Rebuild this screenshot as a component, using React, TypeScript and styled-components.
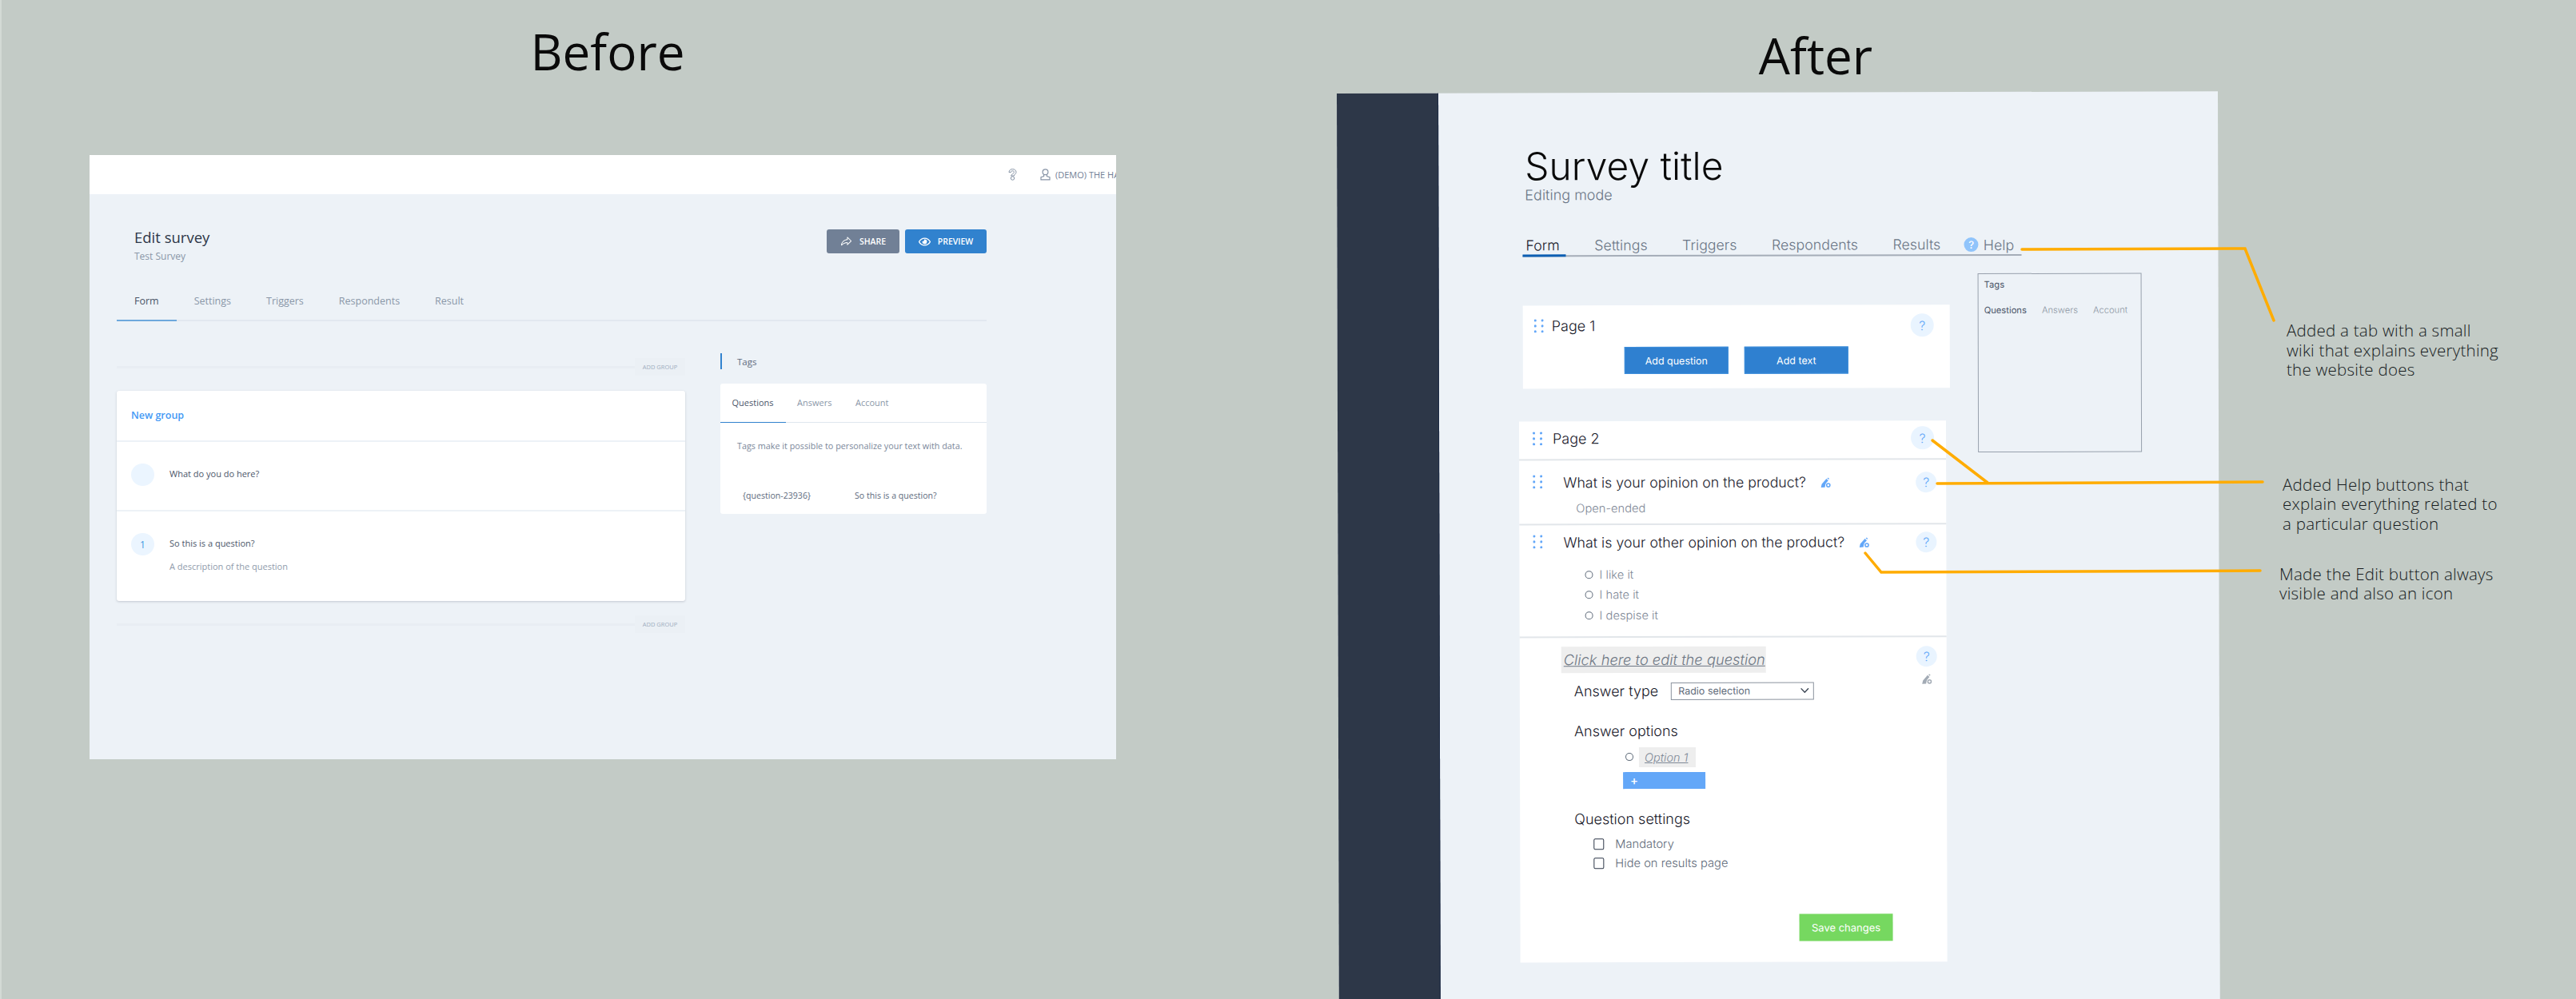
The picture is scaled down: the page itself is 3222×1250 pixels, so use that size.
import React, { JSX } from 'react'
import styled, { createGlobalStyle } from 'styled-components'
import { FaRegEye } from 'react-icons/fa'
import { PiShareFat } from 'react-icons/pi'

const GlobalStyle = createGlobalStyle`
  html, body {
    margin: 0;
    padding: 0;
    background: #c3cbc6;
    overflow: hidden;
  }
  * {
    box-sizing: border-box;
  }
`

const Board = styled.div`
  position: relative;
  display: flex;
  width: 3222px;
  height: 1250px;
  overflow: hidden;
  background: #c3cbc6;
  border-left: 2px solid #d3dad5;
`

const Heading = styled.div<{ $height: number; $top: number; $left: number }>`
  height: ${(p) => p.$height}px;
  padding: ${(p) => p.$top}px 0 0 ${(p) => p.$left}px;
  text-align: center;
  font-family: 'Open Sans', sans-serif;
  font-size: 62px;
  line-height: 62px;
  color: #0a0a0a;
`

/* ---------- before ---------- */

const BeforeColumn = styled.section`
  width: 1284px;
  margin-left: 110px;
  flex-shrink: 0;
`

const BeforePanel = styled.div`
  height: 756px;
  overflow: hidden;
  background: #edf2f7;
  font-family: 'Open Sans', sans-serif;
`

const TopBar = styled.header`
  height: 49px;
  display: flex;
  align-items: center;
  background: #fff;
  padding-left: 1149px;
  white-space: nowrap;
  color: #718096;
  font-size: 11px;
  svg {
    flex-shrink: 0;
  }
`

const UserLabel = styled.div`
  display: flex;
  align-items: center;
  flex-shrink: 0;
  gap: 6px;
  margin-left: 29px;
`

const BeforeBody = styled.div`
  width: 1122px;
  padding-left: 34px;
`

const TitleRow = styled.div`
  display: flex;
  justify-content: space-between;
  padding: 42px 0 0 22px;
`

const EditTitle = styled.div`
  font-size: 18.5px;
  line-height: 24px;
  color: #2d3748;
  font-weight: 500;
`

const EditSubtitle = styled.div`
  font-size: 12px;
  line-height: 18px;
  margin-top: 3px;
  color: #8a97a8;
`

const HeadButtons = styled.div`
  display: flex;
  gap: 7px;
  margin-top: 2px;
`

const HeadButton = styled.div<{ $color: string; $width: number }>`
  width: ${(p) => p.$width}px;
  height: 30px;
  display: flex;
  align-items: center;
  justify-content: center;
  gap: 9px;
  border-radius: 3px;
  background: ${(p) => p.$color};
  color: #fff;
  font-size: 10.5px;
  font-weight: 600;
  svg {
    font-size: 15px;
    flex-shrink: 0;
  }
`

const BeforeTabs = styled.nav`
  height: 49px;
  margin-top: 23px;
  display: flex;
  border-bottom: 2px solid #e2e8f0;
`

const BeforeTab = styled.div<{ $active?: boolean }>`
  height: 49px;
  padding: 0 22px;
  display: flex;
  align-items: center;
  font-size: 12.5px;
  color: ${(p) => (p.$active ? '#4a5568' : '#8a97a8')};
  border-bottom: 2px solid ${(p) => (p.$active ? '#6ea8dd' : 'transparent')};
`

const BeforeColumns = styled.div`
  display: flex;
  gap: 44px;
`

const FormColumn = styled.div`
  width: 711px;
  padding-top: 46px;
`

const AddGroup = styled.div`
  height: 22px;
  display: flex;
  align-items: center;
`

const AddGroupLine = styled.div`
  flex: 1;
  height: 3px;
  background: #e8edf3;
`

const AddGroupLabel = styled.div`
  width: 63px;
  height: 22px;
  display: flex;
  align-items: center;
  justify-content: center;
  background: #ebf0f5;
  color: #a0aec0;
  font-size: 7.5px;
`

const GroupCard = styled.div`
  margin: 19px 0 18px;
  background: #fff;
  border-radius: 3px;
  box-shadow: 0 1px 3px rgba(45, 55, 72, 0.22);
`

const GroupHead = styled.div`
  height: 64px;
  padding: 0 18px 2px;
  display: flex;
  align-items: center;
  border-bottom: 2px solid #edf2f7;
  color: #4299f5;
  font-size: 12.5px;
  font-weight: 600;
`

const GroupQuestion = styled.div<{ $bottom: number; $ruled?: boolean }>`
  display: flex;
  gap: 19px;
  padding: 27px 18px ${(p) => p.$bottom}px;
  border-bottom: ${(p) => (p.$ruled ? '2px solid #edf2f7' : 'none')};
`

const NumberBubble = styled.div`
  width: 29px;
  height: 28px;
  border-radius: 50%;
  display: flex;
  align-items: center;
  justify-content: center;
  background: #ebf5ff;
  color: #4299e1;
  font-size: 12px;
`

const GroupQuestionText = styled.div`
  font-size: 11px;
  line-height: 26px;
  color: #4a5568;
`

const GroupQuestionNote = styled.div`
  font-size: 11px;
  line-height: 18px;
  margin-top: 7px;
  color: #8f9bab;
`

const TagsColumn = styled.div`
  width: 333px;
  padding-top: 40px;
`

const TagsHeading = styled.div`
  height: 20px;
  padding-left: 19px;
  display: flex;
  align-items: center;
  border-left: 2px solid #3182ce;
  color: #5d6a7d;
  font-size: 11.5px;
`

const TagsCard = styled.div`
  height: 163px;
  margin-top: 18px;
  background: #fff;
  border-radius: 3px;
`

const TagsTabs = styled.div`
  height: 49px;
  display: flex;
  border-bottom: 1px solid #dfe6ee;
`

const TagsTab = styled.div<{ $active?: boolean }>`
  height: 49px;
  padding: 0 15px 2px 14.5px;
  display: flex;
  align-items: center;
  font-size: 11px;
  color: ${(p) => (p.$active ? '#4a5568' : '#8a97a8')};
  border-bottom: 1px solid ${(p) => (p.$active ? '#3182ce' : 'transparent')};
`

const TagsIntro = styled.div`
  padding: 21px 0 0 21px;
  font-size: 10.8px;
  line-height: 16px;
  color: #7a879a;
`

const TagRow = styled.div`
  display: flex;
  margin-top: 46px;
  padding-left: 28px;
  font-size: 10.6px;
  line-height: 16px;
  color: #5d6a7d;
`

const TagName = styled.div`
  width: 140px;
`

/* ---------- after ---------- */

const AfterColumn = styled.section`
  width: 1102px;
  margin-left: 276px;
  flex-shrink: 0;
`

const AfterPanel = styled.div`
  height: 1160px;
  display: flex;
  background: #edf2f7;
  font-family: Inter, sans-serif;
  font-weight: 300;
  color: #1a202c;
  transform: rotate(-0.14deg);
  transform-origin: top left;
`

const Sidebar = styled.aside`
  width: 127px;
  background: #2d3748;
  border-right: 1px solid #1c2a44;
`

const Main = styled.main`
  padding: 63px 0 0 105px;
`

const SurveyTitle = styled.h1`
  margin: 0;
  padding-left: 3px;
  font-size: 48px;
  line-height: 58px;
  font-weight: 300;
  color: #0a0a0a;
`

const SurveySubtitle = styled.div`
  margin-top: -5px;
  padding-left: 3px;
  font-size: 18px;
  line-height: 24px;
  color: #6b7686;
`

const AfterTabs = styled.nav`
  width: 624px;
  height: 26px;
  margin-top: 39px;
  padding-left: 4px;
  display: flex;
  align-items: center;
  gap: 43.5px;
  border-bottom: 2px solid #a5adb8;
  font-size: 17.8px;
  color: #6b7686;
`

const AfterTab = styled.div<{ $active?: boolean }>`
  position: relative;
  height: 24px;
  line-height: 24px;
  color: ${(p) => (p.$active ? '#1a202c' : '#6b7686')};
  &::after {
    content: '';
    display: ${(p) => (p.$active ? 'block' : 'none')};
    position: absolute;
    left: -4px;
    right: -8px;
    bottom: -2px;
    height: 3px;
    background: #0d5fb3;
  }
`

const HelpTab = styled.div`
  display: flex;
  align-items: center;
  gap: 6px;
  margin-left: -14px;
  height: 24px;
`

const HelpDisc = styled.div`
  width: 18px;
  height: 18px;
  border-radius: 50%;
  display: flex;
  align-items: center;
  justify-content: center;
  background: #90c4fb;
  color: #fff;
  font-size: 13px;
  font-weight: 500;
`

const AfterColumns = styled.div`
  display: flex;
  align-items: flex-start;
`

const PagesColumn = styled.div`
  width: 534px;
  padding-top: 61px;
`

const PageCard = styled.div<{ $shift?: number; $top?: number }>`
  width: 534px;
  margin-left: ${(p) => p.$shift ?? 0}px;
  margin-top: ${(p) => p.$top ?? 0}px;
  background: #fff;
`

const PageOneCard = styled(PageCard)`
  height: 104px;
`

const PageHead = styled.div<{ $padding: string; $gap: number; $ruled?: boolean }>`
  display: flex;
  align-items: center;
  gap: ${(p) => p.$gap}px;
  padding: ${(p) => p.$padding};
  font-size: 18px;
  border-bottom: ${(p) => (p.$ruled ? '2px solid #e2e6ea' : 'none')};
`

const HelpBubble = styled.div<{ $size: number }>`
  width: ${(p) => p.$size}px;
  height: ${(p) => p.$size}px;
  margin-left: auto;
  flex-shrink: 0;
  border-radius: 50%;
  display: flex;
  align-items: center;
  justify-content: center;
  background: #e9f4ff;
  color: #63a7f8;
  font-size: 16px;
`

const PageActions = styled.div`
  display: flex;
  justify-content: center;
  gap: 20px;
  margin-top: 12px;
`

const AddButton = styled.div`
  width: 130px;
  height: 34px;
  display: flex;
  align-items: center;
  justify-content: center;
  background: #2f80d0;
  border: 1px solid #3f8fdc;
  color: #fff;
  font-size: 12.5px;
  font-weight: 400;
`

const QuestionBlock = styled.div<{ $top: number; $bottom: number }>`
  padding: ${(p) => p.$top}px 12px ${(p) => p.$bottom}px 17px;
  border-bottom: 2px solid #e2e6ea;
`

const QuestionHead = styled.div`
  display: flex;
  align-items: center;
`

const DragSlot = styled.div`
  margin-top: -4px;
  display: flex;
`

const QuestionTitle = styled.div`
  margin: 0 18px 0 26px;
  font-size: 17.8px;
  line-height: 26px;
`

const QuestionKind = styled.div`
  margin: 8px 0 0 54px;
  font-size: 14.7px;
  line-height: 22px;
  color: #7f8997;
`

const RadioList = styled.div`
  margin: 14px 0 0 65px;
`

const RadioRow = styled.div`
  height: 25.5px;
  display: flex;
  align-items: center;
  gap: 8px;
  font-size: 14.7px;
  color: #7f8997;
`

const RadioMark = styled.span`
  width: 10px;
  height: 10px;
  flex-shrink: 0;
  border: 1.5px solid #5f6b7a;
  border-radius: 50%;
`

const Editor = styled.div`
  display: flex;
  padding: 11px 12px 26px 52px;
`

const EditorForm = styled.div`
  flex: 1;
  padding-right: 30px;
`

const EditorTools = styled.div`
  width: 26px;
  display: flex;
  flex-direction: column;
  align-items: center;
  gap: 9px;
`

const EditableTitle = styled.div`
  width: 256px;
  height: 33px;
  padding: 0 3px;
  display: flex;
  align-items: center;
  background: #eeeeee;
  color: #6f7885;
  font-size: 18.3px;
  font-style: italic;
  text-decoration: underline;
  white-space: nowrap;
`

const FieldBlock = styled.div<{ $top: number }>`
  margin: ${(p) => p.$top}px 0 0 16px;
`

const FieldLabel = styled.div`
  font-size: 18px;
  line-height: 26px;
`

const TypeRow = styled.div`
  display: flex;
  align-items: center;
  gap: 16px;
`

const TypeSelect = styled.div`
  width: 179px;
  height: 22px;
  padding: 0 5px 0 8px;
  display: flex;
  align-items: center;
  justify-content: space-between;
  border: 1.5px solid #8b939e;
  color: #5f6b7a;
  font-size: 12.5px;
  font-weight: 400;
`

const OptionRow = styled.div`
  display: flex;
  align-items: center;
  gap: 7px;
  margin: 7px 0 0 64px;
`

const OptionText = styled.div`
  width: 71px;
  height: 25px;
  padding-left: 7px;
  display: flex;
  align-items: center;
  background: #eeeeee;
  color: #7f8997;
  font-size: 14.5px;
  font-style: italic;
  text-decoration: underline;
`

const AddOption = styled.div`
  width: 103px;
  height: 21px;
  margin: 6px 0 0 61px;
  padding-left: 9px;
  display: flex;
  align-items: center;
  background: #63a7f8;
  color: #fff;
  font-size: 15px;
  font-weight: 500;
`

const CheckRow = styled.div<{ $top: number }>`
  height: 24px;
  margin: ${(p) => p.$top}px 0 0 24px;
  display: flex;
  align-items: center;
  gap: 14px;
  font-size: 14.7px;
  color: #5f6b7a;
`

const CheckMark = styled.span`
  width: 13px;
  height: 14px;
  border: 1.5px solid #2d3748;
  border-radius: 2px;
`

const SaveRow = styled.div`
  display: flex;
  justify-content: flex-end;
  margin-top: 52px;
`

const SaveButton = styled.div`
  width: 117px;
  height: 34px;
  display: flex;
  align-items: center;
  justify-content: center;
  background: #76d860;
  color: #fff;
  font-size: 13px;
  font-weight: 400;
`

const TagsBox = styled.div`
  width: 205px;
  height: 224px;
  margin: 22px 0 0 35px;
  padding: 4px 7px;
  border: 1.5px solid #98a1ad;
  font-size: 11.2px;
  line-height: 18px;
  color: #6b7686;
`

const TagsBoxTitle = styled.div`
  color: #4a5568;
  font-weight: 400;
`

const TagsBoxTabs = styled.div`
  display: flex;
  gap: 19px;
  margin-top: 14px;
`

const TagsBoxTab = styled.div<{ $active?: boolean }>`
  color: ${(p) => (p.$active ? '#4a5568' : '#8a94a1')};
  font-weight: ${(p) => (p.$active ? 400 : 300)};
`

/* ---------- notes ---------- */

const NotesColumn = styled.aside`
  flex: 1;
  padding: 401px 0 0 76px;
  font-family: 'Open Sans', sans-serif;
  font-weight: 300;
  font-size: 20.5px;
  letter-spacing: 0.25px;
  line-height: 24.6px;
  color: #151a1c;
`

const Note = styled.p<{ $indent: number; $top: number }>`
  margin: ${(p) => p.$top}px 0 0 ${(p) => p.$indent}px;
  white-space: pre-line;
`

const Connectors = styled.svg`
  position: absolute;
  left: -2px;
  top: 0;
  pointer-events: none;
  fill: none;
  stroke: #ffac00;
  stroke-width: 3.5;
  stroke-linecap: round;
  stroke-linejoin: miter;
`

/* ---------- drawings ---------- */

const DragDots = (): JSX.Element => (
  <svg width='12' height='17' viewBox='0 0 12 17' fill='#63a7f8'>
    {[1.5, 8.5, 15.5].map((y) => (
      <React.Fragment key={y}>
        <circle cx='1.5' cy={y} r='1.6' />
        <circle cx='10.5' cy={y} r='1.6' />
      </React.Fragment>
    ))}
  </svg>
)

const EditIcon = ({ color }: { color: string }): JSX.Element => (
  <svg width='13' height='13' viewBox='0 0 13 13' fill={color}>
    <path d='M0.4 12.6 L1.4 8.2 L7.2 1.6 L9.6 3.8 L6.6 7.2 C6 8.4 5.6 10.2 5.4 12.2 Z' />
    <path d='M8.2 0.8 L9.4 0 L10.8 1.4 L10 2.6 Z' />
    <circle cx='9.6' cy='9.6' r='2.1' fill='none' stroke={color} strokeWidth='1.5' />
  </svg>
)

const BulbIcon = (): JSX.Element => (
  <svg width='11' height='15' viewBox='0 0 11 15' fill='none' stroke='#8794a6' strokeWidth='1'>
    <path d='M1 4.6 C1 2.2 3 0.6 5.4 0.6 C8 0.6 10 2.2 10 4.4 C10 6.6 7.6 7 7.4 9 L3.6 9 C3.6 7 7.4 6.4 7.4 4.4 C7.4 3.4 6.6 2.8 5.4 2.8 C4.2 2.8 3.4 3.6 3.4 4.6 Z' />
    <circle cx='5.5' cy='12' r='2.2' />
  </svg>
)

const UserIcon = (): JSX.Element => (
  <svg width='13' height='15' viewBox='0 0 13 15' fill='none' stroke='#8794a6' strokeWidth='1.2'>
    <circle cx='6.5' cy='4.2' r='3.4' />
    <path d='M4.6 7.6 L4.6 9.6 L1 10.6 L1 13.8 L12 13.8 L12 10.6 L8.4 9.6 L8.4 7.6' />
  </svg>
)

const Chevron = (): JSX.Element => (
  <svg width='11' height='7' viewBox='0 0 11 7' fill='none' stroke='#3a4452' strokeWidth='1.4'>
    <path d='M0.8 0.8 L5.5 5.6 L10.2 0.8' />
  </svg>
)

const App = (): JSX.Element => {
  return (
    <>
      <GlobalStyle />
      <Board>
        <BeforeColumn>
          <Heading $height={194} $top={33} $left={12}>Before</Heading>
          <BeforePanel>
            <TopBar>
              <BulbIcon />
              <UserLabel>
                <UserIcon />
                (DEMO) THE HAGUE UNIVERSITY
              </UserLabel>
            </TopBar>
            <BeforeBody>
              <TitleRow>
                <div>
                  <EditTitle>Edit survey</EditTitle>
                  <EditSubtitle>Test Survey</EditSubtitle>
                </div>
                <HeadButtons>
                  <HeadButton $color='#718096' $width={91}><PiShareFat />SHARE</HeadButton>
                  <HeadButton $color='#3182ce' $width={102}><FaRegEye />PREVIEW</HeadButton>
                </HeadButtons>
              </TitleRow>
              <BeforeTabs>
                <BeforeTab $active>Form</BeforeTab>
                <BeforeTab>Settings</BeforeTab>
                <BeforeTab>Triggers</BeforeTab>
                <BeforeTab>Respondents</BeforeTab>
                <BeforeTab>Result</BeforeTab>
              </BeforeTabs>
              <BeforeColumns>
                <FormColumn>
                  <AddGroup><AddGroupLine /><AddGroupLabel>ADD GROUP</AddGroupLabel></AddGroup>
                  <GroupCard>
                    <GroupHead>New group</GroupHead>
                    <GroupQuestion $bottom={30} $ruled>
                      <NumberBubble />
                      <GroupQuestionText>What do you do here?</GroupQuestionText>
                    </GroupQuestion>
                    <GroupQuestion $bottom={34}>
                      <NumberBubble>1</NumberBubble>
                      <div>
                        <GroupQuestionText>So this is a question?</GroupQuestionText>
                        <GroupQuestionNote>A description of the question</GroupQuestionNote>
                      </div>
                    </GroupQuestion>
                  </GroupCard>
                  <AddGroup><AddGroupLine /><AddGroupLabel>ADD GROUP</AddGroupLabel></AddGroup>
                </FormColumn>
                <TagsColumn>
                  <TagsHeading>Tags</TagsHeading>
                  <TagsCard>
                    <TagsTabs>
                      <TagsTab $active>Questions</TagsTab>
                      <TagsTab>Answers</TagsTab>
                      <TagsTab>Account</TagsTab>
                    </TagsTabs>
                    <TagsIntro>Tags make it possible to personalize your text with data.</TagsIntro>
                    <TagRow>
                      <TagName>{'{question-23936}'}</TagName>
                      <div>So this is a question?</div>
                    </TagRow>
                  </TagsCard>
                </TagsColumn>
              </BeforeColumns>
            </BeforeBody>
          </BeforePanel>
        </BeforeColumn>

        <AfterColumn>
          <Heading $height={117} $top={38} $left={96}>After</Heading>
          <AfterPanel>
            <Sidebar />
            <Main>
              <SurveyTitle>Survey title</SurveyTitle>
              <SurveySubtitle>Editing mode</SurveySubtitle>
              <AfterTabs>
                <AfterTab $active>Form</AfterTab>
                <AfterTab>Settings</AfterTab>
                <AfterTab>Triggers</AfterTab>
                <AfterTab>Respondents</AfterTab>
                <AfterTab>Results</AfterTab>
                <HelpTab><HelpDisc>?</HelpDisc>Help</HelpTab>
              </AfterTabs>
              <AfterColumns>
                <PagesColumn>
                  <PageOneCard>
                    <PageHead $padding='11px 20px 0 14px' $gap={10}>
                      <DragDots />
                      Page 1
                      <HelpBubble $size={29}>?</HelpBubble>
                    </PageHead>
                    <PageActions>
                      <AddButton>Add question</AddButton>
                      <AddButton>Add text</AddButton>
                    </PageActions>
                  </PageOneCard>
                  <PageCard $shift={-5} $top={41}>
                    <PageHead $padding='7px 15px 11px 17px' $gap={13} $ruled>
                      <DragDots />
                      Page 2
                      <HelpBubble $size={29}>?</HelpBubble>
                    </PageHead>
                    <QuestionBlock $top={15} $bottom={8}>
                      <QuestionHead>
                        <DragSlot><DragDots /></DragSlot>
                        <QuestionTitle>What is your opinion on the product?</QuestionTitle>
                        <EditIcon color='#63a7f8' />
                        <HelpBubble $size={26}>?</HelpBubble>
                      </QuestionHead>
                      <QuestionKind>Open-ended</QuestionKind>
                    </QuestionBlock>
                    <QuestionBlock $top={9} $bottom={13}>
                      <QuestionHead>
                        <DragSlot><DragDots /></DragSlot>
                        <QuestionTitle>What is your other opinion on the product?</QuestionTitle>
                        <EditIcon color='#63a7f8' />
                        <HelpBubble $size={26}>?</HelpBubble>
                      </QuestionHead>
                      <RadioList>
                        <RadioRow><RadioMark />I like it</RadioRow>
                        <RadioRow><RadioMark />I hate it</RadioRow>
                        <RadioRow><RadioMark />I despise it</RadioRow>
                      </RadioList>
                    </QuestionBlock>
                    <Editor>
                      <EditorForm>
                        <EditableTitle>Click here to edit the question</EditableTitle>
                        <FieldBlock $top={10}>
                          <TypeRow>
                            <FieldLabel>Answer type</FieldLabel>
                            <TypeSelect>Radio selection<Chevron /></TypeSelect>
                          </TypeRow>
                        </FieldBlock>
                        <FieldBlock $top={24}>
                          <FieldLabel>Answer options</FieldLabel>
                          <OptionRow><RadioMark /><OptionText>Option 1</OptionText></OptionRow>
                          <AddOption>+</AddOption>
                        </FieldBlock>
                        <FieldBlock $top={25}>
                          <FieldLabel>Question settings</FieldLabel>
                          <CheckRow $top={6}><CheckMark />Mandatory</CheckRow>
                          <CheckRow $top={0}><CheckMark />Hide on results page</CheckRow>
                        </FieldBlock>
                        <SaveRow><SaveButton>Save changes</SaveButton></SaveRow>
                      </EditorForm>
                      <EditorTools>
                        <HelpBubble $size={26}>?</HelpBubble>
                        <EditIcon color='#a3abb5' />
                      </EditorTools>
                    </Editor>
                  </PageCard>
                </PagesColumn>
                <TagsBox>
                  <TagsBoxTitle>Tags</TagsBoxTitle>
                  <TagsBoxTabs>
                    <TagsBoxTab $active>Questions</TagsBoxTab>
                    <TagsBoxTab>Answers</TagsBoxTab>
                    <TagsBoxTab>Account</TagsBoxTab>
                  </TagsBoxTabs>
                </TagsBox>
              </AfterColumns>
            </Main>
          </AfterPanel>
        </AfterColumn>

        <NotesColumn>
          <Note $indent={10} $top={0}>{'Added a tab with a small\nwiki that explains everything\nthe website does'}</Note>
          <Note $indent={5} $top={119}>{'Added Help buttons that\nexplain everything related to\na particular question'}</Note>
          <Note $indent={1} $top={38}>{'Made the Edit button always\nvisible and also an icon'}</Note>
        </NotesColumn>

        <Connectors width='3222' height='1250' viewBox='0 0 3222 1250'>
          <polyline points='2529,312 2808,311 2844,401' />
          <polyline points='2417,551 2486,604' />
          <polyline points='2423,605 2830,603' />
          <polyline points='2333,692 2353,716 2827,714' />
        </Connectors>
      </Board>
    </>
  )
}

export default App
